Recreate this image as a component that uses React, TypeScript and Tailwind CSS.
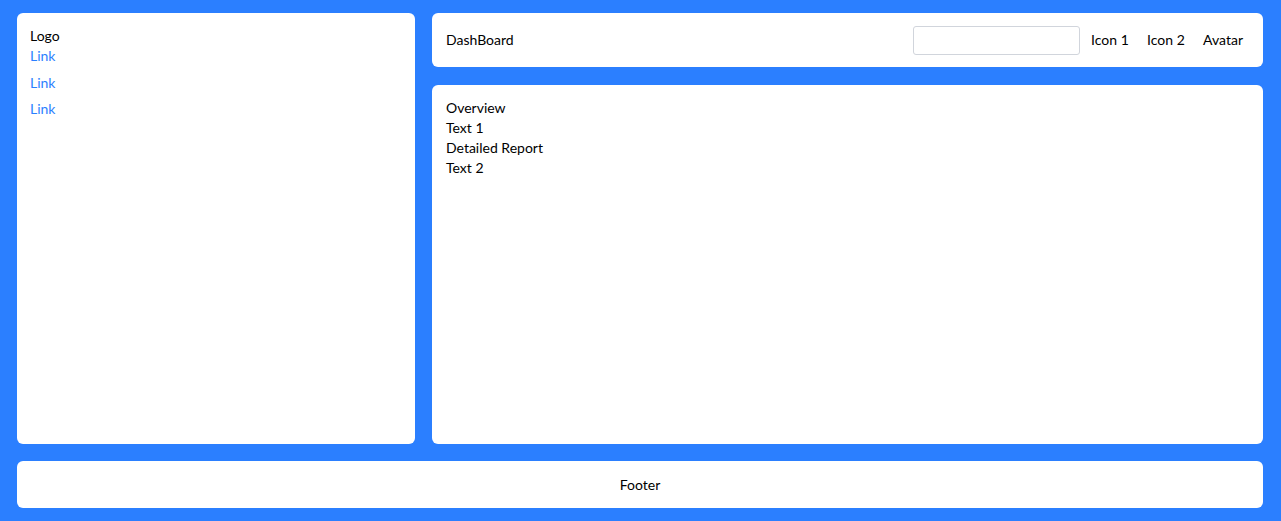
const links = ["Link", "Link", "Link"]

export default function App() {
  return (
    <div
      className="h-screen bg-blue-500 flex flex-col gap-[17px] pt-[13px] pb-[13px] pl-[17px] pr-[18px] text-[14px] text-black"
      style={{ fontFamily: 'Lato, "Open Sans", sans-serif' }}
    >
      <div className="flex flex-1 gap-[17px] min-h-0">
        {/* Sidebar */}
        <aside className="w-[398px] bg-white rounded-md px-[13px] pt-[13px] flex flex-col leading-[20px]">
          <div>Logo</div>
          <nav className="flex flex-col gap-[6.5px]">
            {links.map((l, i) => (
              <a key={i} href="#" className="text-blue-500">
                {l}
              </a>
            ))}
          </nav>
        </aside>

        <div className="flex-1 flex flex-col gap-[18px]">
          {/* Header */}
          <header className="h-[54px] bg-white rounded-md flex items-center pl-[14px] pr-[20px] leading-[20px]">
            <div className="flex-1 pb-[1px]">DashBoard</div>
            <input
              type="text"
              className="w-[167px] h-[29px] border border-gray-300 rounded-[3px] mr-[11px] outline-none"
            />
            <span className="w-[56px] pb-[1px]">Icon 1</span>
            <span className="w-[56px] pb-[1px]">Icon 2</span>
            <span className="pb-[1px]">Avatar</span>
          </header>

          {/* Main */}
          <main className="flex-1 bg-white rounded-md px-[14px] pt-[13px] leading-[20px]">
            <div>Overview</div>
            <div>Text 1</div>
            <div>Detailed Report</div>
            <div>Text 2</div>
          </main>
        </div>
      </div>

      {/* Footer */}
      <footer className="h-[47px] bg-white rounded-md flex items-center justify-center">Footer</footer>
    </div>
  )
}
